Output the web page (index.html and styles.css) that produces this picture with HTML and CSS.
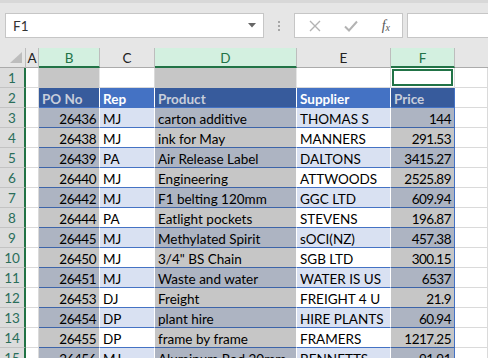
FILE: index.html
```html
<!DOCTYPE html>
<html>
<head>
<meta charset="utf-8">
<link rel="stylesheet" href="styles.css">
</head>
<body>
<div class="app">
  <div class="fbar">
    <div class="namebox"><span class="nb-text">F1</span><svg class="nb-arrow" width="8" height="5" viewBox="0 0 8 5"><path d="M0 0H8L4 4.5Z" fill="#666"/></svg></div>
    <div class="dots"><i></i><i></i><i></i></div>
    <div class="fxbox">
      <svg class="ico" width="12" height="12" viewBox="0 0 12 12"><path d="M1 1L11 11M11 1L1 11" stroke="#b3b3b3" stroke-width="1.4"/></svg>
      <svg class="ico" width="14" height="12" viewBox="0 0 14 12"><path d="M1 6.5L5 10.5L13 1.5" stroke="#b3b3b3" stroke-width="2" fill="none"/></svg>
      <span class="fx"><span class="fx-f">f</span><span class="fx-x">x</span></span>
    </div>
    <div class="finput"></div>
  </div>

  <div class="sheet">
    <div class="corner"><svg width="12" height="11" viewBox="0 0 12 11"><path d="M12 0V11H0Z" fill="#bdbdbd"/></svg></div>
    <div class="ch">A</div>
    <div class="ch sel">B</div>
    <div class="ch">C</div>
    <div class="ch sel">D</div>
    <div class="ch">E</div>
    <div class="ch sel">F</div>
    <div class="ch last"></div>

    <div class="rh">1</div>
    <div class="c"></div>
    <div class="c gs"></div>
    <div class="c"></div>
    <div class="c gs"></div>
    <div class="c"></div>
    <div class="c active"><div class="ring"></div></div>
    <div class="c"></div>

    <div class="rh">2</div>
    <div class="c"></div>
    <div class="c hd s">PO No</div>
    <div class="c hd">Rep</div>
    <div class="c hd s">Product</div>
    <div class="c hd">Supplier</div>
    <div class="c hd s edge">Price</div>
    <div class="c"></div>

    <div class="rh">3</div>
    <div class="c"></div>
    <div class="c bd bn s num">26436</div>
    <div class="c bd bn">MJ</div>
    <div class="c bd bn s">carton additive</div>
    <div class="c bd bn">THOMAS S</div>
    <div class="c bd bn s num edge">144</div>
    <div class="c"></div>

    <div class="rh">4</div>
    <div class="c"></div>
    <div class="c bd s num">26438</div>
    <div class="c bd">MJ</div>
    <div class="c bd s">ink for May</div>
    <div class="c bd">MANNERS</div>
    <div class="c bd s num edge">291.53</div>
    <div class="c"></div>

    <div class="rh">5</div>
    <div class="c"></div>
    <div class="c bd bn s num">26439</div>
    <div class="c bd bn">PA</div>
    <div class="c bd bn s">Air Release Label</div>
    <div class="c bd bn">DALTONS</div>
    <div class="c bd bn s num edge">3415.27</div>
    <div class="c"></div>

    <div class="rh">6</div>
    <div class="c"></div>
    <div class="c bd s num">26440</div>
    <div class="c bd">MJ</div>
    <div class="c bd s">Engineering</div>
    <div class="c bd">ATTWOODS</div>
    <div class="c bd s num edge">2525.89</div>
    <div class="c"></div>

    <div class="rh">7</div>
    <div class="c"></div>
    <div class="c bd bn s num">26442</div>
    <div class="c bd bn">MJ</div>
    <div class="c bd bn s">F1 belting 120mm</div>
    <div class="c bd bn">GGC LTD</div>
    <div class="c bd bn s num edge">609.94</div>
    <div class="c"></div>

    <div class="rh">8</div>
    <div class="c"></div>
    <div class="c bd s num">26444</div>
    <div class="c bd">PA</div>
    <div class="c bd s">Eatlight pockets</div>
    <div class="c bd">STEVENS</div>
    <div class="c bd s num edge">196.87</div>
    <div class="c"></div>

    <div class="rh">9</div>
    <div class="c"></div>
    <div class="c bd bn s num">26445</div>
    <div class="c bd bn">MJ</div>
    <div class="c bd bn s">Methylated Spirit</div>
    <div class="c bd bn">sOCI(NZ)</div>
    <div class="c bd bn s num edge">457.38</div>
    <div class="c"></div>

    <div class="rh">10</div>
    <div class="c"></div>
    <div class="c bd s num">26450</div>
    <div class="c bd">MJ</div>
    <div class="c bd s">3/4" BS Chain</div>
    <div class="c bd">SGB LTD</div>
    <div class="c bd s num edge">300.15</div>
    <div class="c"></div>

    <div class="rh">11</div>
    <div class="c"></div>
    <div class="c bd bn s num">26451</div>
    <div class="c bd bn">MJ</div>
    <div class="c bd bn s">Waste and water</div>
    <div class="c bd bn">WATER IS US</div>
    <div class="c bd bn s num edge">6537</div>
    <div class="c"></div>

    <div class="rh">12</div>
    <div class="c"></div>
    <div class="c bd s num">26453</div>
    <div class="c bd">DJ</div>
    <div class="c bd s">Freight</div>
    <div class="c bd">FREIGHT 4 U</div>
    <div class="c bd s num edge">21.9</div>
    <div class="c"></div>

    <div class="rh">13</div>
    <div class="c"></div>
    <div class="c bd bn s num">26454</div>
    <div class="c bd bn">DP</div>
    <div class="c bd bn s">plant hire</div>
    <div class="c bd bn">HIRE PLANTS</div>
    <div class="c bd bn s num edge">60.94</div>
    <div class="c"></div>

    <div class="rh">14</div>
    <div class="c"></div>
    <div class="c bd s num">26455</div>
    <div class="c bd">DP</div>
    <div class="c bd s">frame by frame</div>
    <div class="c bd">FRAMERS</div>
    <div class="c bd s num edge">1217.25</div>
    <div class="c"></div>

    <div class="rh">15</div>
    <div class="c"></div>
    <div class="c bd bn s num">26456</div>
    <div class="c bd bn">MJ</div>
    <div class="c bd bn s">Aluminum Rod 20mm</div>
    <div class="c bd bn">BENNETTS</div>
    <div class="c bd bn s num edge">91.91</div>
    <div class="c"></div>
  </div>
</div>
</body>
</html>
```

FILE: styles.css
```css
* { box-sizing: border-box; }
html, body { margin: 0; padding: 0; }
body {
  width: 488px;
  height: 358px;
  overflow: hidden;
  background: #e6e6e6;
  font-family: Lato, "Open Sans", sans-serif;
}
.app { display: flex; flex-direction: column; }

.fbar {
  height: 48px;
  display: flex;
  align-items: flex-start;
  border-top: 3px solid #d8d8d8;
  padding-top: 10px;
}
.namebox {
  margin-left: 5px;
  width: 259px;
  height: 25px;
  background: #fff;
  border: 1px solid #c6c6c6;
  display: flex;
  align-items: center;
  justify-content: space-between;
  padding: 0 7px 0 7px;
}
.nb-text { font-size: 13.5px; color: #333; }
.nb-arrow { display: block; }
.dots {
  width: 30px;
  height: 25px;
  display: flex;
  flex-direction: column;
  align-items: center;
  justify-content: center;
  gap: 2px;
}
.dots i { display: block; width: 2px; height: 2px; background: #a6a6a6; }
.fxbox {
  width: 109px;
  height: 25px;
  background: #fff;
  border: 1px solid #c6c6c6;
  display: flex;
  align-items: center;
  justify-content: space-between;
  padding: 0 12px 0 14px;
}
.ico { display: block; }
.fx { font-family: "Liberation Serif", serif; font-style: italic; color: #555; font-size: 14px; line-height: 1; }
.fx-x { font-size: 10px; position: relative; top: 1px; }
.finput {
  margin-left: 4px;
  flex: 1;
  height: 25px;
  background: #fff;
  border: 1px solid #c6c6c6;
  border-right: none;
}

.sheet {
  display: grid;
  grid-template-columns: 26px 13px 61px 55px 142px 94px 64px 1fr;
  grid-auto-rows: 20px;
  font-size: 13.5px;
  background: #fff;
}
.corner {
  background: #e6e6e6;
  border-right: 1px solid #bdbdbd;
  border-bottom: 1px solid #ababab;
  display: flex;
  align-items: flex-end;
  justify-content: flex-end;
  padding: 0 3px 4px 0;
}
.corner svg { display: block; }
.ch {
  background: #e6e6e6;
  border-right: 1px solid #bdbdbd;
  border-bottom: 1px solid #ababab;
  text-align: center;
  line-height: 20px;
  overflow: hidden;
  color: #222;
  font-size: 13.5px;
}
.ch.last { border-right: none; }
.ch.sel {
  background: #d3f0e0;
  color: #217346;
  border-bottom: 2px solid #217346;
}
.rh {
  background: #dcdcdc;
  color: #2a6e5a;
  border-right: 2px solid #217346;
  border-bottom: 1px solid #c3c3c3;
  text-align: center;
  line-height: 21px;
  overflow: hidden;
}

.c {
  background: #fff;
  border-right: 1px solid #dadada;
  border-bottom: 1px solid #dadada;
  padding: 0 3px;
  line-height: 22px;
  white-space: nowrap;
  overflow: hidden;
  color: #000;
}
.c.gs { background: #c6c6c6; border-right-color: #e6e6e6; border-bottom-color: #c6c6c6; }
.c.active { padding: 1px; }
.ring { height: 100%; border: 2px solid #217346; }

.c.hd {
  background: #4472c4;
  color: #fff;
  font-weight: 700;
  border-right-color: #fff;
  border-bottom-color: #4472c4;
}
.c.hd.s { background: #375b9c; color: #c8cedb; }

.c.bd {
  background: #fff;
  border-right-color: #fff;
  border-bottom-color: #4472c4;
}
.c.bd.s { background: #c6c6c6; border-bottom-color: #3d64a8; }
.c.bd.bn { background: #d9e1f2; }
.c.bd.bn.s { background: #adb4c2; }
.c.edge { border-right: 1px solid #4472c4; }
.num { text-align: right; letter-spacing: -0.5px; }
```
